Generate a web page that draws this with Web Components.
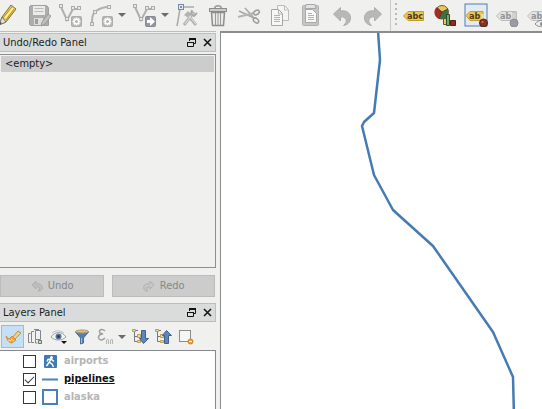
<!DOCTYPE html>
<html lang="en">
<head>
<meta charset="utf-8">
<title>Map editor</title>
<style>
html, body { height: 100%; margin: 0; }
body { background: #f0f0ef; color: #1c1c1c; font: 11px/16px "DejaVu Sans Condensed", "DejaVu Sans", sans-serif; overflow: hidden; }
</style>
</head>
<body>
<map-app></map-app>
<script>
const svg = (w, h, body) => `<svg width="${w}" height="${h}" viewBox="0 0 ${w} ${h}" fill="none" aria-hidden="true">${body}</svg>`;
const node = (x, y) => `<rect x="${x}" y="${y}" width="3" height="3" fill="#e8e8e8" stroke="#acacac"/>`;
const gear = `<rect x="13.5" y="13.5" width="10" height="10" rx="1" fill="#b4b4b4" stroke="#acacac"/><path d="M18.5 14.5v8M14.5 18.5h8M15.7 15.7l5.6 5.6M21.3 15.7l-5.6 5.6" stroke="#fff" stroke-width="1.8"/><circle cx="18.5" cy="18.5" r="1.5" fill="#b4b4b4"/>`;
const tag = (fill, edge) => `<path d="M1.500 13 6 8.500h15.500v9H6z" fill="${fill}" stroke="${edge}"/>`;
const tagText = (t, c) => `<text x="5" y="16" font-family="DejaVu Sans Condensed, DejaVu Sans, sans-serif" font-size="9" font-weight="700" fill="${c}">${t}</text>`;
const back = `<path d="M3.500 11 10.500 4.500V8c6-1 10 2 10 7 0 4-3 7-7 7.500 2-2 3.500-4 2.500-6-1-2-3-3-5.500-2.500v4z" fill="#b8b8b8" stroke="#adadad"/>`;
const tree = `<path d="M1 2.500h6M3.500 3v10.500H8M3.500 8.500H8" stroke="#777"/><path d="M1.500 1.500h3v2h-3zM6.500 6.500h3v3h-3zM6.500 12.500h3v2h-3z" fill="#ead9ab" stroke="#bd9b59"/>`;
const ICONS = {
  pencil: svg(24, 24, `<path d="M3 22 6 14 15 2l5 4-10 13z" fill="#eccb4c" stroke="#7f7046"/><path d="M7 15 16 4M10 17l8-11" stroke="#b18e2c"/><path d="m9 15 8-10" stroke="#fff1a0" stroke-width="2"/><path d="m3 22 3-8 4 5z" fill="#e9e0cf" stroke="#777"/><path d="m3 22 1-3 2 1z" fill="#444"/>`),
  save: svg(24, 24, `<path d="M3.500 2.500h16l2 2v18h-18l-1-1v-18z" fill="#adadad" stroke="#a0a0a0"/><path d="M6 3h12v9H6z" fill="#ebebeb"/><path d="M7.500 5.500h9M7.500 8.500h9" stroke="#bcbcbc"/><path d="M7 15h9v7H7z" fill="#dedede"/><path d="M8 16h3v5H8z" fill="#9e9e9e"/><path d="m14 23 1-4 6-8 3 2-6 8z" fill="#c0c0c0" stroke="#9a9a9a"/>`),
  line: svg(24, 24, `<path d="m3 4 6 13 6-11h6" stroke="#b0b0b0" stroke-width="2"/>${node(1.5, 1.5)}${node(7.5, 14.5)}${node(13.5, 3.5)}${node(19.5, 3.5)}${gear}`),
  curve: svg(24, 24, `<path d="M3 21c0-6 0-10 4-13 3-2 6-4 12-4" stroke="#b0b0b0" stroke-width="2"/>${node(1.5, 19.5)}${node(4.5, 7.5)}${node(18.5, 2.5)}${gear}`),
  move: svg(24, 24, `<path d="m3 4 6 13 6-11h6" stroke="#b0b0b0" stroke-width="2"/>${node(1.5, 1.5)}${node(7.5, 14.5)}${node(13.5, 3.5)}${node(19.5, 3.5)}<rect x="13.500" y="13.500" width="10" height="10" rx="1" fill="#9297a0" stroke="#858991"/><path d="M15 17h3v-3l5 4.500-5 4.500v-3h-3z" fill="#fff"/>`),
  nodes: svg(24, 24, `<path d="M5 6 2 23M7 4h12" stroke="#aaa" stroke-width="1.500"/><rect x="3.500" y="1.500" width="5" height="5" fill="#e8edf2" stroke="#7388a0"/><path d="M5 3h2v2H5z" fill="#7990ac"/><path d="m12 11 9 11M19 9 9 22" stroke="#b2b2b2" stroke-width="3"/><path d="m13 12 8 9M18 10 10 21" stroke="#e4e4e4"/><path d="m9 12 4-4 3 3-4 3z" fill="#b2b2b2"/><path d="m17 7-1 4 3 2 3-3" stroke="#aaa" stroke-width="2"/>`),
  trash: svg(24, 24, `<path d="M8.500 5c1-3 6-3 7 0" stroke="#999" stroke-width="1.500"/><rect x="3.500" y="5.500" width="17" height="3" fill="#ccc" stroke="#8d8d8d"/><path d="M5.500 9.500h13l-1 13h-11z" fill="#eaeaea" stroke="#8d8d8d" stroke-width="1.500"/><path d="M9.500 10v12M12 10v12M14.500 10v12" stroke="#999"/>`),
  cut: svg(24, 24, `<path d="m2 8 15 7M8 5l9 10" stroke="#a8a8a8" stroke-width="1.500"/><path d="m1 14 16-4" stroke="#b5b5b5" stroke-width="2"/><ellipse cx="19.500" cy="9.500" rx="3" ry="2" transform="rotate(-30 19.500 9.500)" stroke="#9b9b9b" stroke-width="1.500"/><ellipse cx="19" cy="17.500" rx="3" ry="2" transform="rotate(40 19 17.500)" stroke="#9b9b9b" stroke-width="1.500"/>`),
  copy: svg(24, 24, `<path d="M9.500 2.500h7l4 4v11h-11z" fill="#f4f4f4" stroke="#bdbdbd"/><path d="M16.500 3v4h4" stroke="#bdbdbd"/><path d="M3.500 6.500h7l4 4v12h-11z" fill="#f7f7f7" stroke="#a6a6a6"/><path d="M10.500 7v4h4M6 12.500h6M6 14.500h6M6 16.500h6M6 18.500h6" stroke="#b2b2b2"/>`),
  paste: svg(24, 24, `<rect x="3.500" y="2.500" width="16" height="20" rx="1" fill="#c6c6c6" stroke="#b0b0b0"/><path d="M7 1.500h9l1 4H6z" fill="#e2e2e2" stroke="#a8a8a8"/><path d="M6.500 6.500h7l4 4v9h-11z" fill="#f8f8f8" stroke="#a8a8a8"/><path d="M9 10.500h4M9 12.500h6M9 14.500h6M9 16.500h6" stroke="#b2b2b2"/>`),
  undo: svg(24, 24, back),
  redo: svg(24, 24, `<g transform="matrix(-1 0 0 1 24 0)">${back}</g>`),
  label: svg(24, 24, tag('#edc54f', '#c39c31') + tagText('abc', '#4b3c19')),
  chart: svg(24, 24, `<circle cx="9" cy="9" r="6.500" fill="#e9c953" stroke="#695d35"/><path d="M9 9 4 4a7 7 0 0 0 2 12z" fill="#a52c24"/><path d="m9 9-3 7a7 7 0 0 0 9-4l0-6z" fill="#387347"/><path d="m9 9-5-4M9 9l-3 7M9 9l6-3" stroke="#593d24"/><path d="M10.500 15.500h3v6h-3z" fill="#e9c953" stroke="#665624"/><path d="M13.500 11.500h3v11h-3z" fill="#79a865" stroke="#294d31"/><path d="M17.500 17.500h5v5h-5z" fill="#952820" stroke="#5b1a16"/>`),
  pin: svg(24, 24, `<rect x="1" y="1" width="22" height="22" fill="#e4eaf1" stroke="#4a7eb8" stroke-width="1"/><path d="M2 12.500 6 8.500h13v9H6z" fill="#edc54f" stroke="#c39c31"/><text x="5" y="16" font-family="DejaVu Sans Condensed, DejaVu Sans, sans-serif" font-size="9" font-weight="700" fill="#4b3c19">ab</text><path d="M18.500 11v7" stroke="#eee3b1" stroke-width="2"/><circle cx="19.500" cy="20" r="4" fill="#8e2f21" stroke="#562319"/><circle cx="18.500" cy="19" r="1" fill="#cf8250"/>`),
  pinOff: svg(24, 24, tag('#e4e4e4', '#bdbdbd') + tagText('ab', '#929292') + `<path d="M19 9v9" stroke="#bbb" stroke-width="3"/><path d="M19 10v7" stroke="#eee"/><circle cx="19" cy="20" r="4" fill="#999ca0" stroke="#8a8c90"/>`),
  show: svg(24, 24, tag('#e4e4e4', '#bdbdbd') + tagText('abc', '#929292') + `<path d="M9 21c4-5 10-5 15 0-5 4-11 4-15 0z" fill="#eee" stroke="#888"/><circle cx="16" cy="21" r="2" fill="#888"/>`),
  style: svg(18, 18, `<path d="m8 10 6-7 3 2-7 7z" fill="#eed18a" stroke="#c59030"/><path d="m2 8 3 3 3-3 4 4-4 3c-3 0-5-3-6-7z" fill="#eca344" stroke="#d59238"/><path d="m4 12 3 1m0-2 3 2" stroke="#ffe1a0"/>`),
  group: svg(18, 18, `<path d="M3.500 14.500h-2v-9h2M7 3.500H4.500v11H7M8.500 2.500h5v9h-5z" stroke="#7c8591"/><path d="M7 1.500h5M8.500 12v3h2" stroke="#7c8591"/><path d="M11.500 12.500h3v3h-3z" fill="#d4d9d5" stroke="#66776c"/>`),
  eye: svg(18, 18, `<path d="M1 9c4-6 11-6 15 0-4 4-11 4-15 0z" fill="#f4f4f4" stroke="#9b9ea3"/><path d="M2 5c4-3 8-3 12 0" stroke="#c3c3c3"/><circle cx="8.500" cy="8.500" r="3" fill="#59749a"/><circle cx="8.500" cy="8.500" r="1.300" fill="#26384e"/><path d="M11 13h6l-3 3z" fill="#111"/>`),
  filter: svg(18, 18, `<path d="m2.500 4 5 6v6l3-1v-5l5-6z" fill="#527faf" stroke="#476f9b"/><ellipse cx="9" cy="3.500" rx="6.500" ry="1.500" fill="#e5bd73" stroke="#a99470"/><path d="M8.500 10v5" stroke="#9fc0df"/>`),
  expr: svg(18, 18, `<path d="M9 3C6 0 2 2 4 5l3 1C2 6 1 11 5 12c2 0 3-1 4-2" stroke="#a0a0a0" stroke-width="1.500"/><path d="M10.500 16v-3c0-2 2-2 2-1v4M14.500 16v-3c0-2 2-2 2-1v4" stroke="#b5b5b5"/>`),
  expand: svg(18, 18, tree + `<path d="M10.500 2.500h4v8h3l-5 5-4-5h2z" fill="#5f86c0" stroke="#3f608c"/>`),
  collapse: svg(18, 18, tree + `<path d="M10.500 15.500h4v-8h3l-5-5-4 5h2z" fill="#5f86c0" stroke="#3f608c"/>`),
  remove: svg(18, 18, `<rect x="2.500" y="2.500" width="11" height="11" fill="#f6f6f6" stroke="#8b8b8b"/><circle cx="13.500" cy="13.500" r="2.500" fill="#e8a43a" stroke="#c78425"/><path d="M12 13.500h3" stroke="#fff"/>`),
  undoSmall: svg(14, 14, `<path d="m2 6 4-4v3c5-1 7 2 6 5-1 2-2 2-4 2 1-1 2-3 1-4H6v2z" fill="#bebebe" stroke="#b0b0b0"/>`),
  redoSmall: svg(14, 14, `<path d="m12 6-4-4v3C3 4 1 7 2 10c1 2 2 2 4 2-1-1-2-3-1-4h3v2z" fill="#c8c8c8" stroke="#b0b0b0"/>`),
  float: svg(9, 9, `<path d="M2.500 3V1.500h6v4H7" stroke="#111"/><path d="M2 1h7" stroke="#111" stroke-width="2"/><path d="M.5 4.500h6v4h-6z" fill="#dcdddd" stroke="#111"/><path d="M0 4.500h7" stroke="#111"/>`),
  close: svg(9, 9, `<path d="m1 1 7 7M8 1 1 8" stroke="#111" stroke-width="1.500"/>`),
  line1: svg(16, 16, `<path d="M0 8.500h16" stroke="#4a83b5" stroke-width="2"/>`),
  airport: svg(16, 16, `<rect x="2" y="2" width="13" height="13" rx="1" fill="#4179b4"/><circle cx="9.500" cy="4.500" r="1.500" fill="#fff"/><path d="M9 6 7 9.500 4.500 13M7 9l3 2 1.500 3M5 8.500l1-2 3-.5 3 2.500" stroke="#fff" stroke-width="1.500"/>`),
  polygon: svg(16, 16, `<rect x="1" y="1" width="14" height="14" fill="#fff" stroke="#4a7fb8" stroke-width="2"/>`)
};

class Base extends HTMLElement {
  connectedCallback() {
    if (this.shadowRoot) return;
    this.attachShadow({ mode: 'open' }).innerHTML = `<style>*{box-sizing:border-box}svg{display:block;flex:none}</style>` + this.view();
  }
}

customElements.define('tool-button', class extends Base {
  view() {
    return `<style>
      :host { display: block; flex: none; width: var(--tool-width, 31px); }
      button { display: flex; align-items: center; justify-content: center; width: 100%; height: var(--tool-height, 28px); padding: 0; border: 1px solid transparent; background: none; }
      :host([active]) button { background: #c5e0f4; border-color: #8fc0e4; }
    </style><button type="button" aria-label="${this.getAttribute('label')}">${ICONS[this.getAttribute('icon')]}</button>`;
  }
});

customElements.define('menu-arrow', class extends Base {
  view() {
    return `<style>
      :host { display: block; flex: none; width: 12px; }
      button { display: flex; align-items: center; justify-content: center; width: 100%; height: 24px; padding: 0; border: 0; background: none; }
    </style><button type="button" aria-label="More tools">${svg(8, 4, '<path d="M0 0h8L4 4z" fill="#6b6b6b"/>')}</button>`;
  }
});

customElements.define('main-toolbar', class extends Base {
  view() {
    const b = (i, l) => `<tool-button icon="${i}" label="${l}"></tool-button>`;
    return `<style>
      :host { display: flex; height: 31px; overflow: hidden; background: #f0f0ef; }
      .edit, .labels { display: flex; align-items: center; flex: none; padding-bottom: 2px; }
      .edit { margin-left: -8px; padding-right: 2px; border-right: 1px solid #c9c9c9; }
      .grip { flex: none; width: 2px; height: 24px; margin: 3px 1px 0 4px; background: repeating-linear-gradient(#b9b9b9 0 2px, transparent 2px 5px); }
    </style>
    <div class="edit">${b('pencil', 'Toggle editing')}${b('save', 'Save edits')}${b('line', 'Add feature')}${b('curve', 'Add circular string')}<menu-arrow></menu-arrow>${b('move', 'Move feature')}<menu-arrow></menu-arrow>${b('nodes', 'Node tool')}${b('trash', 'Delete')}${b('cut', 'Cut')}${b('copy', 'Copy')}${b('paste', 'Paste')}${b('undo', 'Undo')}${b('redo', 'Redo')}</div>
    <span class="grip"></span>
    <div class="labels">${b('label', 'Labeling')}${b('chart', 'Diagrams')}${b('pin', 'Highlight pinned labels')}${b('pinOff', 'Pin labels')}${b('show', 'Show labels')}</div>`;
  }
});

customElements.define('dock-panel', class extends Base {
  view() {
    return `<style>
      :host { display: flex; flex-direction: column; min-height: 0; }
      header { display: flex; align-items: center; flex: none; height: 19px; padding: 0 0 0 3px; background: #dadcdb; border: 1px solid #bdbfbf; border-left: 0; }
      h2 { flex: 1; margin: 0; font: inherit; }
      button { display: flex; align-items: center; justify-content: center; width: 16px; height: 16px; padding: 0; border: 0; background: none; }
    </style>
    <header><h2>${this.getAttribute('heading')}</h2>
      <button type="button" aria-label="Float">${ICONS.float}</button>
      <button type="button" aria-label="Close">${ICONS.close}</button></header>
    <slot></slot>`;
  }
});

customElements.define('undo-history', class extends Base {
  view() {
    return `<style>
      :host { display: block; }
      ul { height: 214px; margin: 2px 0 0; padding: 1px; list-style: none; border: 1px solid #8b8f94; border-left: 0; background: #f0f0ee; }
      li { height: 16px; padding: 0 4px; line-height: 16px; background: #cccccc; }
      .actions { display: grid; grid-template-columns: 1fr 1fr; gap: 8px; padding: 7px 1px 6px 0; }
      button { display: flex; align-items: center; justify-content: center; gap: 4px; height: 22px; padding: 0; border: 1px solid #bcbcbc; background: #cccccc; color: #84888a; font: inherit; }
    </style>
    <ul><li>&lt;empty&gt;</li></ul>
    <div class="actions"><button type="button" disabled>${ICONS.undoSmall}Undo</button><button type="button" disabled>${ICONS.redoSmall}Redo</button></div>`;
  }
});

customElements.define('layer-row', class extends Base {
  view() {
    return `<style>
      :host { display: block; color: #b5b5b5; }
      label { display: flex; align-items: center; height: 18px; padding-left: 23px; font-weight: 700; }
      input { appearance: none; display: grid; place-items: center; flex: none; width: 13px; height: 13px; margin: 0 6px 0 0; border: 1px solid #3c3335; background: #fff; }
      input:checked::before { content: ""; width: 8px; height: 4px; margin-bottom: 2px; border: solid #333; border-width: 0 0 1px 1px; transform: rotate(-45deg); }
      span { margin-left: 6px; }
      :host([current]) { color: #111; }
      :host([current]) span { text-decoration: underline; }
    </style>
    <label><input type="checkbox" ${this.hasAttribute('checked') ? 'checked' : ''}>${ICONS[this.getAttribute('symbol')]}<span><slot></slot></span></label>`;
  }
});

customElements.define('layer-tree', class extends Base {
  view() {
    const b = (i, l, a = '') => `<tool-button icon="${i}" label="${l}" ${a}></tool-button>`;
    return `<style>
      :host { display: flex; flex-direction: column; flex: 1; min-height: 0; }
      nav { --tool-width: 23px; --tool-height: 23px; display: flex; align-items: center; flex: none; height: 28px; padding: 1px 0 0 1px; }
      .tree { flex: 1; overflow: hidden; padding-top: 1px; background: #fff; border: solid #858a90; border-width: 1px 1px 0 0; }
    </style>
    <nav>${b('style', 'Layer styling', 'active')}${b('group', 'Add group')}${b('eye', 'Manage visibility')}${b('filter', 'Filter legend')}${b('expr', 'Filter by expression')}<menu-arrow></menu-arrow>${b('expand', 'Expand all')}${b('collapse', 'Collapse all')}${b('remove', 'Remove layer')}</nav>
    <div class="tree"><layer-row symbol="airport">airports</layer-row><layer-row symbol="line1" checked current>pipelines</layer-row><layer-row symbol="polygon">alaska</layer-row></div>`;
  }
});

customElements.define('map-canvas', class extends Base {
  view() {
    return `<style>
      :host { display: block; min-width: 0; overflow: hidden; background: #fff; border: solid #8c8c8c; border-width: 2px 0 0 1px; }
      svg { width: 100%; height: 100%; }
    </style>
    <svg role="img" aria-label="Pipeline route" fill="none"><path d="M157-2l2 29-6 53-10 9-2 4 12 49 19 35 40 36 60 86 20 45 1 40" stroke="#457bb2" stroke-width="2.500" stroke-linejoin="round"/></svg>`;
  }
});

customElements.define('map-app', class extends Base {
  view() {
    return `<style>
      :host { display: grid; grid-template: auto minmax(0, 1fr) / 216px minmax(0, 1fr); column-gap: 4px; height: 100vh; }
      main-toolbar { grid-column: 1 / -1; }
      aside { display: flex; flex-direction: column; min-height: 0; padding-top: 1px; border-top: 1px solid #bcbcbc; }
      .layers { flex: 1; }
    </style>
    <main-toolbar></main-toolbar>
    <aside><dock-panel heading="Undo/Redo Panel"><undo-history></undo-history></dock-panel><dock-panel class="layers" heading="Layers Panel"><layer-tree></layer-tree></dock-panel></aside>
    <map-canvas></map-canvas>`;
  }
});
</script>
</body>
</html>
